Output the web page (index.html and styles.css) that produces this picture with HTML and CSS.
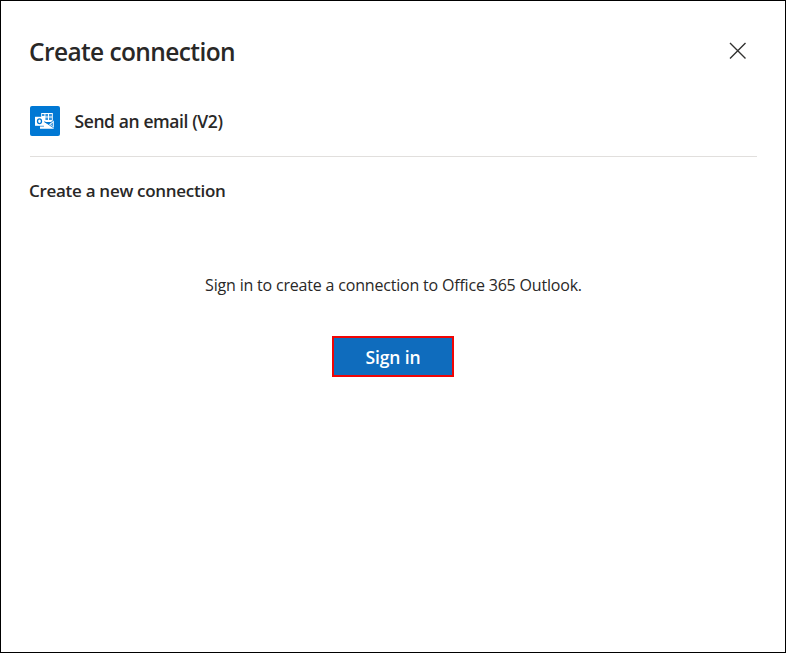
FILE: index.html
```html
<!DOCTYPE html>
<html lang="en">
<head>
<meta charset="utf-8">
<title>Create connection</title>
<link rel="stylesheet" href="styles.css">
</head>
<body>
<main class="panel">
  <header class="panel-header">
    <h1 class="title">Create connection</h1>
    <button class="close" aria-label="Close"><svg width="18" height="18" viewBox="0 0 18 18"><path d="M1 1L16.5 16.5M16.5 1L1 16.5"/></svg></button>
  </header>
  <section class="action">
    <svg class="logo" width="30" height="30" viewBox="0 0 30 30">
      <rect width="30" height="30" rx="2" fill="#0078d4"/>
      <path d="M11.2 7H22.8V16H11.2Z" fill="#fff"/>
      <path d="M12 8H14.4V10H12ZM15.4 8H18V10.5H15.4ZM19 8H21.9V10.5H19ZM15.4 11.5H18V14H15.4ZM19 11.5H21.9V14H19Z" fill="#0078d4" fill-opacity=".8"/>
      <path d="M10 20.4H14V16L18.5 18.4L23.8 14.5V22.8H10Z" fill="#fff"/>
      <path d="M14.4 15.4L18.4 18.3L23.8 22M18.4 18.3L23 14.8" fill="none" stroke="#0078d4" stroke-width=".8"/>
      <path d="M20.3 18.5L23 16.5V20.4Z" fill="#0078d4" fill-opacity=".7"/>
      <rect x="5" y="10.8" width="9" height="9" fill="#fff"/>
      <ellipse cx="9.5" cy="15.3" rx="2" ry="2.4" fill="none" stroke="#0078d4" stroke-width="1.3"/>
    </svg>
    <h2 class="action-name">Send an email (V2)</h2>
  </section>
  <h3 class="subtitle">Create a new connection</h3>
  <p class="message">Sign in to create a connection to Office 365 Outlook.</p>
  <button class="sign-in">Sign in</button>
</main>
</body>
</html>
```
FILE: styles.css
```css
* { box-sizing: border-box; }
body { margin: 0; font-family: "Open Sans", "Noto Sans", sans-serif; color: #292827; }
.panel { display: flex; flex-direction: column; height: 653px; padding: 34px 28px 0 29px; border: 1px solid #000; background: #fff; }
.panel-header { display: flex; justify-content: space-between; height: 34px; }
h1, h2, h3, p { margin: 0; font-weight: 600; white-space: nowrap; }
.title { margin-left: -1px; font-size: 24.5px; line-height: 34px; letter-spacing: -0.6px; }
.close { display: grid; place-items: center; width: 39px; height: 32px; padding: 0; border: 0; background: none; }
.close path { stroke: #323130; stroke-width: 1.4; fill: none; }
.action { display: flex; align-items: center; gap: 14.5px; height: 88px; padding-top: 16px; border-bottom: 1px solid #e1dfdd; }
.action-name { padding-top: 1px; font-size: 17.5px; letter-spacing: -0.4px; }
.subtitle { margin: 22px 0 0 -1px; font-size: 17px; line-height: 24px; letter-spacing: -0.29px; }
.message { margin-top: 70px; font-size: 16px; font-weight: 400; line-height: 24px; letter-spacing: -0.19px; text-align: center; }
.sign-in { align-self: center; width: 122px; height: 41px; margin: 39px 1px 0 0; padding: 0; border: 2px solid #f00505; background: #0f6cbd; color: #fff; font: 600 17.5px "Open Sans", sans-serif; letter-spacing: -0.15px; }
```
